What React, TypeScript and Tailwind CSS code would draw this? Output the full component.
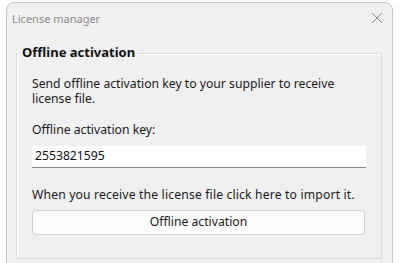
import React from "react";

export default function App() {
  const font = { fontFamily: '"Noto Sans", "Segoe UI", Tahoma, sans-serif' };
  return (
    <div className="w-[399px] h-[263px] bg-white overflow-hidden" style={font}>
      <div className="ml-[6px] mt-[2px] w-[387px] h-[270px] bg-[#f0f0f0] border border-[#c4c4c4] rounded-t-[8px] flex flex-col">
        <div className="h-[30px] flex items-center justify-between pl-[5px] pr-[9px]">
          <span className="text-[11px] text-[#8a8a8a] leading-none">License manager</span>
          <svg width="12" height="12" viewBox="0 0 12 12" className="text-[#8a8a8a]">
            <path d="M1 1 L11 11 M11 1 L1 11" stroke="currentColor" strokeWidth="1" fill="none" />
          </svg>
        </div>
        <div className="relative ml-[9px] mt-[20px] w-[366px] h-[206px] border border-[#d8d8d8] shadow-[inset_1px_1px_0_#ffffff]">
          <span className="absolute left-[2px] top-[-11px] px-[3px] bg-[#f0f0f0] text-[13px] font-bold text-[#111] leading-[18px]">
            Offline activation
          </span>
          <div className="pl-[15px] pr-[10px] pt-[22px] flex flex-col text-[12.2px] text-[#1a1a1a]">
            <p className="leading-[15px]">
              Send offline activation key to your supplier to receive
              <br />
              license file.
            </p>
            <p className="mt-[16px] leading-[15px]">Offline activation key:</p>
            <div className="mt-[9px] w-[334px] h-[22px] bg-white border-b border-[#8c8c8c] flex items-center pl-[3px] text-[12.2px] text-[#111]">
              2553821595
            </div>
            <p className="mt-[19px] leading-[15px] tracking-[0.15px] whitespace-nowrap">When you receive the license file click here to import it.</p>
            <button className="mt-[8px] w-[333px] h-[25px] bg-[#fdfdfd] border border-[#d0d0d0] rounded-[4px] text-[12.2px] text-[#1a1a1a] flex items-center justify-center">
              Offline activation
            </button>
          </div>
        </div>
      </div>
    </div>
  );
}
